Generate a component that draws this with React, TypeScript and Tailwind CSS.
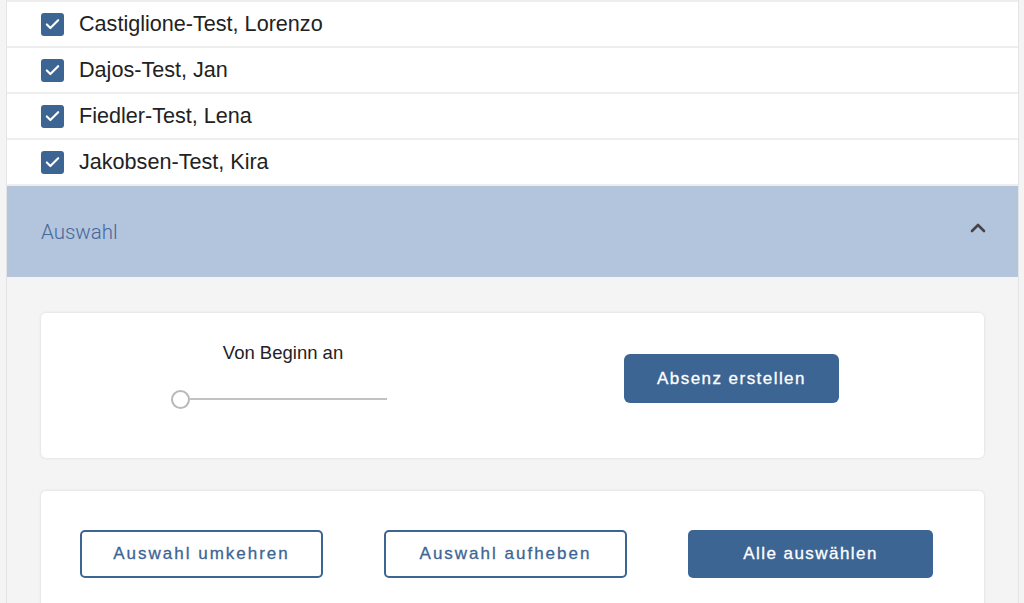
import { Check } from 'lucide-react'

const people = ['Castiglione-Test, Lorenzo', 'Dajos-Test, Jan', 'Fiedler-Test, Lena', 'Jakobsen-Test, Kira']

function PersonRow({ name }: { name: string }) {
  return (
    <div className="flex h-[46px] items-center border-t-2 border-[#eeeeee] bg-white pl-[34px]">
      <span className="flex h-[23px] w-[23px] items-center justify-center rounded-[3px] bg-[#3d6594]">
        <Check size={17} strokeWidth={3} className="text-white" />
      </span>
      <span className="ml-[15px] text-[21.6px] text-[#222]">{name}</span>
    </div>
  )
}

function Card({ children, className = '' }: { children: React.ReactNode; className?: string }) {
  return (
    <div className={`rounded-[5px] bg-white shadow-[0_0_3px_rgba(0,0,0,0.12)] ${className}`}>{children}</div>
  )
}

const outlineBtn =
  'h-[48px] w-[243px] rounded-[5px] border-2 border-[#3d6594] bg-white text-[17px] tracking-[2px] text-[#3d6594] [-webkit-text-stroke:0.3px_#3d6594]'

export default function App() {
  return (
    <div className="h-[603px] overflow-hidden bg-[#f4f4f4] font-['Liberation_Sans',Arial,sans-serif]">
      <div className="ml-[6px] h-full w-[1013px] border-x border-[#e4e4e4]">
        {people.map((p) => (
          <PersonRow key={p} name={p} />
        ))}

        <div className="flex h-[93px] items-center justify-between border-t-2 border-[#eeeeee] bg-[#b3c4dd] pl-[34px] pr-[32px]">
          <span className="mt-[2px] font-['Roboto',sans-serif] text-[20.5px] font-light text-[#46689a]">Auswahl</span>
          <svg width="16" height="10" viewBox="0 0 16 10" className="mb-[8px]">
            <polyline points="2,8 8,2 14,8" fill="none" stroke="#444" strokeWidth="2.6" strokeLinecap="round" strokeLinejoin="round" />
          </svg>
        </div>

        <div className="px-[34px] pt-[36px]">
          <Card className="flex h-[145px] items-start">
            <div className="ml-[130px] mt-[26px] flex w-[216px] flex-col items-center">
              <span className="pl-[8px] text-[18.5px] text-[#222]">Von Beginn an</span>
              <div className="mt-[23px] flex w-full items-center">
                <span className="h-[19px] w-[19px] shrink-0 rounded-full border-2 border-[#b9b9b9] bg-white" />
                <span className="h-[2px] flex-1 bg-[#c2c2c2]" />
              </div>
            </div>
            <button className="ml-[237px] mt-[41px] h-[49px] w-[215px] rounded-[6px] bg-[#3d6594] text-[17px] tracking-[1.45px] text-white [-webkit-text-stroke:0.3px_white]">
              Absenz erstellen
            </button>
          </Card>

          <Card className="mt-[33px] flex h-[140px] gap-[61px] pl-[39px] pt-[39px]">
            <button className={outlineBtn}>Auswahl umkehren</button>
            <button className={outlineBtn}>Auswahl aufheben</button>
            <button className="h-[48px] w-[245px] rounded-[5px] bg-[#3d6594] text-[17px] tracking-[1.45px] text-white [-webkit-text-stroke:0.3px_white]">
              Alle auswählen
            </button>
          </Card>
        </div>
      </div>
    </div>
  )
}
